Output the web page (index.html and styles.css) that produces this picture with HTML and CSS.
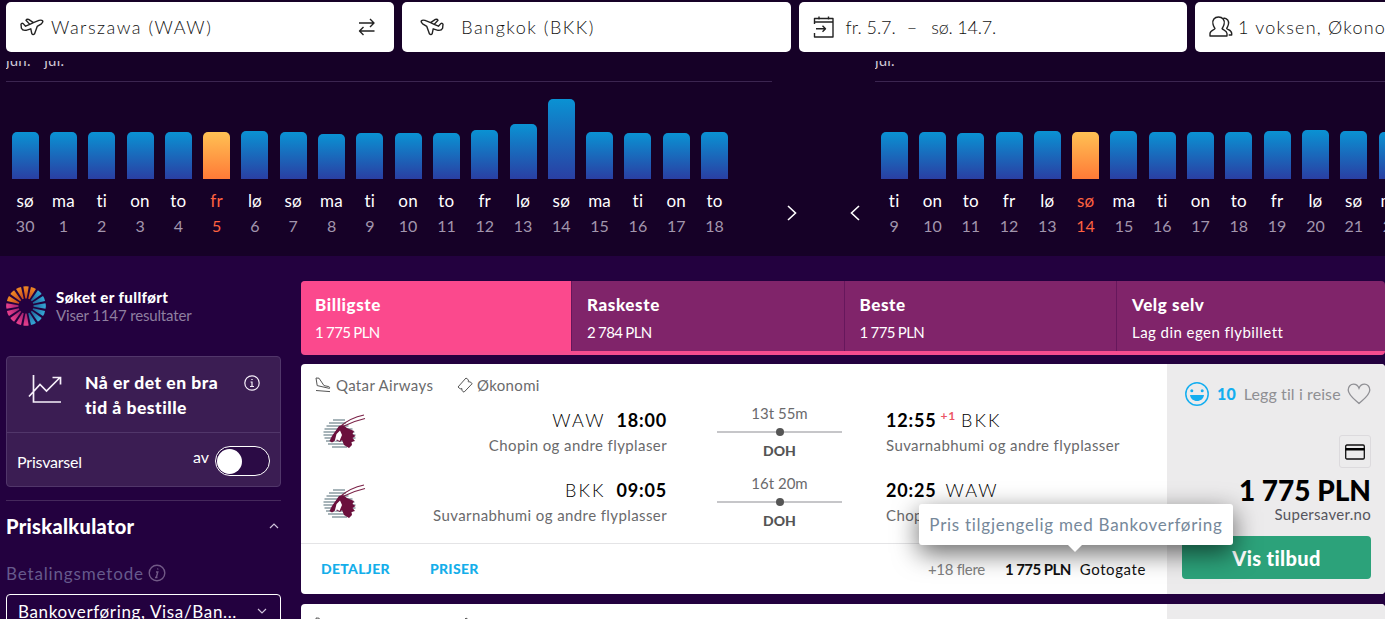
FILE: index.html
```html
<!DOCTYPE html>
<html lang="no">

<head>
    <meta charset="UTF-8">
    <meta name="viewport" content="width=device-width, initial-scale=1.0">
    <title>Warszawa - Bangkok</title>
    <link rel="stylesheet" href="styles.css">
</head>

<body>
    <!-- Symbols used more than once -->
    <svg class="symbols" width="0" height="0">
        <symbol id="plane" viewBox="0 0 24 18">
            <path d="M3.200 5.600 Q1.600 4.800 1 6.200 L1.400 10.200 Q2.600 12.800 6 12.300 L10.800 10.800 L11.800 15.600 Q13 17.400 14.600 15.800 L17.200 8.400 L21.400 5.800 Q23.400 4 22.600 2.800 Q21.500 1.600 19 2.400 L13.400 4.600 L8.600 1.400 Q6.600 1 6 2.200 L9.800 6.400 L5.600 8.200 Z M9.800 6.400 L13.400 4.600"/>
        </symbol>
        <symbol id="qatar" viewBox="0 0 44 36">
            <g stroke="#8b9ca3" stroke-width="1.500">
                <path d="M11 6h12M7 9h17M4.500 12h22M2.500 15h28M1.500 18h31M1.500 21h32M2.500 24h31M4 27h27M6 30h22M10 33h15"/>
            </g>
            <path fill="#6b0f3c" d="M7.500 27 L10 22 L17 12 L21 11 L25 14 L32 17 L30.500 20 L33.500 22 L30.500 24 L33 27 L29.500 28 L30 31 L27 34 L22 31 L20 26 L18 28 L14 26 L10 28.500 Z"/>
            <path fill="#fff" d="M12.500 28 L14.500 20 L18 16.500 L20 21 L17.500 27 L15 25.500 Z"/>
            <path fill="none" stroke="#7b2248" stroke-width="1.200" d="M19 12 Q28 4 42 1 M22 12 Q32 7 43 4.500"/>
        </symbol>
        <symbol id="takeoff" viewBox="0 0 16 16">
            <path d="M1 1 L4 1.200 L9 8.600 L13.800 9.600 Q15.200 10.200 14.500 11.400 L2.200 8.600 Z M1 13.500 L15 14.600"/>
        </symbol>
        <symbol id="ticket" viewBox="0 0 16 16">
            <path d="M1 10 L9 1 L11.600 3 Q10.200 5.400 13 4.800 L15.200 6.600 L7 15.200 L4.800 13.400 Q6 10.800 3.200 11.800 Z"/>
        </symbol>
    </svg>

    <!-- Search bar -->
    <div class="search">
        <div class="field">
            <svg class="line-icon plane" width="24" height="18"><use href="#plane"/></svg>
            <span class="field-text from">Warszawa (WAW)</span>
            <svg class="line-icon swap" width="18" height="18" viewBox="0 0 18 18"><path d="M1 5h15M12 1l4 4-4 4M16.500 13H1.500M5.500 9l-4 4 4 4"/></svg>
        </div>
        <div class="field">
            <svg class="line-icon plane flip" width="24" height="18"><use href="#plane"/></svg>
            <span class="field-text to">Bangkok (BKK)</span>
        </div>
        <div class="field">
            <svg class="line-icon calendar" width="22" height="22" viewBox="0 0 22 22"><path d="M1.500 8V2.500h18.500v18.500H1.500V17M1.500 6H20M6 .5v3M15.500 .5v3M3 12.700h9.500M9.500 9.700l3 3-3 3"/></svg>
            <span class="field-text date">fr. 5.7.</span>
            <span class="field-text date dash">–</span>
            <span class="field-text date">sø. 14.7.</span>
        </div>
        <div class="field">
            <svg class="line-icon people" width="24" height="22" viewBox="0 0 24 22"><path d="M9.500 1c-4 0-6.500 3-5.500 7.200.4 2 1.300 3 2 4.300-.2 1.500-4.800 1.500-5 5V20H18v-2.500c-.2-3.500-4.600-3.500-4.900-5 .7-1.300 1.600-2.300 2-4.300C16.100 4 13.500 1 9.500 1zM14.500 2c4 .3 5.500 3 5 6-.3 2-1.200 3-1.800 4.500.8 1.500 4.800 1.300 5 5V19h-3"/></svg>
            <span class="field-text guests">1 voksen, Økonomi</span>
        </div>
    </div>

    <!-- Price calendar -->
    <div class="calendar-row">
        <div class="chart">
            <div class="months"><span>jun.</span><span>jul.</span></div>
            <div class="days">
                <div class="day"><div class="bar" style="height: 47px"></div><b>sø</b><i>30</i></div>
                <div class="day"><div class="bar" style="height: 47px"></div><b>ma</b><i>1</i></div>
                <div class="day"><div class="bar" style="height: 47px"></div><b>ti</b><i>2</i></div>
                <div class="day"><div class="bar" style="height: 47px"></div><b>on</b><i>3</i></div>
                <div class="day"><div class="bar" style="height: 47px"></div><b>to</b><i>4</i></div>
                <div class="day active"><div class="bar" style="height: 47px"></div><b>fr</b><i>5</i></div>
                <div class="day"><div class="bar" style="height: 48px"></div><b>lø</b><i>6</i></div>
                <div class="day"><div class="bar" style="height: 47px"></div><b>sø</b><i>7</i></div>
                <div class="day"><div class="bar" style="height: 45px"></div><b>ma</b><i>8</i></div>
                <div class="day"><div class="bar" style="height: 46px"></div><b>ti</b><i>9</i></div>
                <div class="day"><div class="bar" style="height: 46px"></div><b>on</b><i>10</i></div>
                <div class="day"><div class="bar" style="height: 46px"></div><b>to</b><i>11</i></div>
                <div class="day"><div class="bar" style="height: 49px"></div><b>fr</b><i>12</i></div>
                <div class="day"><div class="bar" style="height: 55px"></div><b>lø</b><i>13</i></div>
                <div class="day"><div class="bar" style="height: 80px"></div><b>sø</b><i>14</i></div>
                <div class="day"><div class="bar" style="height: 47px"></div><b>ma</b><i>15</i></div>
                <div class="day"><div class="bar" style="height: 46px"></div><b>ti</b><i>16</i></div>
                <div class="day"><div class="bar" style="height: 46px"></div><b>on</b><i>17</i></div>
                <div class="day"><div class="bar" style="height: 47px"></div><b>to</b><i>18</i></div>
            </div>
        </div>
        <div class="arrows">
            <svg width="10" height="16" viewBox="0 0 10 16"><path d="M1 1l7.500 7L1 15"/></svg>
            <svg width="10" height="16" viewBox="0 0 10 16"><path d="M9 1L1.500 8 9 15"/></svg>
        </div>
        <div class="chart">
            <div class="months"><span>jul.</span></div>
            <div class="days">
                <div class="day"><div class="bar" style="height: 47px"></div><b>ti</b><i>9</i></div>
                <div class="day"><div class="bar" style="height: 47px"></div><b>on</b><i>10</i></div>
                <div class="day"><div class="bar" style="height: 46px"></div><b>to</b><i>11</i></div>
                <div class="day"><div class="bar" style="height: 47px"></div><b>fr</b><i>12</i></div>
                <div class="day"><div class="bar" style="height: 48px"></div><b>lø</b><i>13</i></div>
                <div class="day active"><div class="bar" style="height: 47px"></div><b>sø</b><i>14</i></div>
                <div class="day"><div class="bar" style="height: 48px"></div><b>ma</b><i>15</i></div>
                <div class="day"><div class="bar" style="height: 47px"></div><b>ti</b><i>16</i></div>
                <div class="day"><div class="bar" style="height: 47px"></div><b>on</b><i>17</i></div>
                <div class="day"><div class="bar" style="height: 47px"></div><b>to</b><i>18</i></div>
                <div class="day"><div class="bar" style="height: 48px"></div><b>fr</b><i>19</i></div>
                <div class="day"><div class="bar" style="height: 49px"></div><b>lø</b><i>20</i></div>
                <div class="day"><div class="bar" style="height: 48px"></div><b>sø</b><i>21</i></div>
                <div class="day"><div class="bar" style="height: 47px"></div><b>ma</b><i>22</i></div>
            </div>
        </div>
    </div>

    <div class="page">
        <!-- Sidebar -->
        <div class="sidebar">
            <div class="status">
                <svg width="40" height="40" viewBox="-20 -20 40 40">
                    <defs>
                        <path id="ray" d="M-.7 -7.500 L-2.700 -19.500 Q0 -20.200 2.700 -19.500 L.7 -7.500 Z"/>
                        <linearGradient id="orange" x2="0" y2="1"><stop stop-color="#f08a24"/><stop offset="1" stop-color="#c94a1f"/></linearGradient>
                        <linearGradient id="blue" x2="0" y2="1"><stop stop-color="#35a8d8"/><stop offset="1" stop-color="#1f6699"/></linearGradient>
                        <linearGradient id="pink" x2="0" y2="1"><stop stop-color="#ea3f8e"/><stop offset="1" stop-color="#a32470"/></linearGradient>
                    </defs>
                    <g fill="url(#orange)">
                        <use href="#ray" transform="rotate(-67.500)"/><use href="#ray" transform="rotate(-45)"/><use href="#ray" transform="rotate(-22.500)"/><use href="#ray"/><use href="#ray" transform="rotate(22.500)"/>
                    </g>
                    <g fill="url(#blue)">
                        <use href="#ray" transform="rotate(45)"/><use href="#ray" transform="rotate(67.500)"/><use href="#ray" transform="rotate(90)"/><use href="#ray" transform="rotate(112.500)"/><use href="#ray" transform="rotate(135)"/><use href="#ray" transform="rotate(157.500)"/>
                    </g>
                    <g fill="url(#pink)">
                        <use href="#ray" transform="rotate(180)"/><use href="#ray" transform="rotate(202.500)"/><use href="#ray" transform="rotate(225)"/><use href="#ray" transform="rotate(247.500)"/><use href="#ray" transform="rotate(270)"/>
                    </g>
                </svg>
                <div>
                    <div class="status-title">Søket er fullført</div>
                    <div class="status-count">Viser 1147 resultater</div>
                </div>
            </div>

            <div class="advice">
                <div class="advice-top">
                    <svg class="trend" width="34" height="30" viewBox="0 0 34 30"><path d="M5.500 1v27H33M1 22.500L12 10.500l6.500 6.500L31.500 4M24.500 3.500h8v7"/></svg>
                    <div class="advice-text">Nå er det en bra<br>tid å bestille</div>
                    <svg class="info" width="16" height="16" viewBox="0 0 16 16"><circle cx="8" cy="8" r="7.200"/><path d="M6.500 7H8v4.500M6 11.500h4M7.300 4.500h1.400"/></svg>
                </div>
                <div class="advice-bottom">
                    <span class="alert-label">Prisvarsel</span>
                    <span class="alert-state">av</span>
                    <span class="toggle"></span>
                </div>
            </div>

            <div class="section">
                <div class="section-head">
                    <span>Priskalkulator</span>
                    <svg width="10" height="6" viewBox="0 0 10 6"><path d="M1 5l4-4 4 4"/></svg>
                </div>
                <div class="method">
                    <span>Betalingsmetode</span>
                    <svg width="18" height="18" viewBox="0 0 18 18"><circle cx="9" cy="9" r="7.800"/><path d="M8 8h1.800L8.300 13.500M9.800 4.500l-.2 1M7 13.500h2.500"/></svg>
                </div>
                <div class="select">
                    <span>Bankoverføring, Visa/Ban...</span>
                    <svg width="10" height="6" viewBox="0 0 10 6"><path d="M1 1l4 4 4-4"/></svg>
                </div>
            </div>
        </div>

        <!-- Results -->
        <div class="results">
            <div class="tabs">
                <div class="tab selected"><div class="tab-title">Billigste</div><div class="tab-price">1 775 PLN</div></div>
                <div class="tab"><div class="tab-title">Raskeste</div><div class="tab-price">2 784 PLN</div></div>
                <div class="tab"><div class="tab-title">Beste</div><div class="tab-price">1 775 PLN</div></div>
                <div class="tab"><div class="tab-title">Velg selv</div><div class="tab-price wide">Lag din egen flybillett</div></div>
            </div>

            <div class="card">
                <div class="card-main">
                    <div class="card-head">
                        <svg class="head-icon" width="16" height="16"><use href="#takeoff"/></svg>
                        <span class="airline">Qatar Airways</span>
                        <svg class="head-icon" width="16" height="16"><use href="#ticket"/></svg>
                        <span class="cabin">Økonomi</span>
                    </div>
                    <div class="leg">
                        <svg class="airline-logo" width="44" height="36"><use href="#qatar"/></svg>
                        <div class="depart">
                            <div class="place"><span>WAW</span><strong>18:00</strong></div>
                            <div class="airport">Chopin og andre flyplaser</div>
                        </div>
                        <div class="route">
                            <div class="duration">13t 55m</div>
                            <div class="track"></div>
                            <div class="stop">DOH</div>
                        </div>
                        <div class="arrive">
                            <div class="place"><strong>12:55</strong><sup>+1</sup><span>BKK</span></div>
                            <div class="airport">Suvarnabhumi og andre flyplasser</div>
                        </div>
                    </div>
                    <div class="leg">
                        <svg class="airline-logo" width="44" height="36"><use href="#qatar"/></svg>
                        <div class="depart">
                            <div class="place"><span>BKK</span><strong>09:05</strong></div>
                            <div class="airport">Suvarnabhumi og andre flyplasser</div>
                        </div>
                        <div class="route">
                            <div class="duration">16t 20m</div>
                            <div class="track"></div>
                            <div class="stop">DOH</div>
                        </div>
                        <div class="arrive">
                            <div class="place"><strong>20:25</strong><span>WAW</span></div>
                            <div class="airport">Chopin og andre flyplaser</div>
                        </div>
                    </div>
                    <div class="card-foot">
                        <span class="link">DETALJER</span>
                        <span class="link">PRISER</span>
                        <div class="offers">
                            <span class="more">+18 flere</span>
                            <strong>1 775 PLN</strong>
                            <span class="agent">Gotogate</span>
                            <div class="tooltip">Pris tilgjengelig med Bankoverføring</div>
                        </div>
                    </div>
                </div>
                <div class="card-side">
                    <div class="rating">
                        <svg width="24" height="24" viewBox="0 0 24 24"><circle cx="12" cy="12" r="11.200" fill="none" stroke="#14aef0" stroke-width="1.500"/><circle cx="6.800" cy="8.800" r="1.500"/><circle cx="17.200" cy="8.800" r="1.500"/><path d="M5 13h14c-.5 3.800-3.300 6-7 6s-6.500-2.200-7-6z"/></svg>
                        <strong>10</strong>
                        <span>Legg til i reise</span>
                        <svg class="heart" width="24" height="22" viewBox="0 0 24 22"><path d="M12 20.500C7 16 1.200 12 1.200 7c0-3.500 2.500-5.800 5.300-5.800 2.500 0 4.500 1.500 5.500 4 1-2.500 3-4 5.500-4 2.800 0 5.300 2.300 5.300 5.800 0 5-5.800 9-10.800 13.500z"/></svg>
                    </div>
                    <div class="payment">
                        <svg width="22" height="18" viewBox="0 0 22 18"><rect x="1.700" y="2" width="18.600" height="14" rx="1.200" fill="none" stroke="#111" stroke-width="1.300"/><path d="M1.500 5h19v2.500h-19z"/></svg>
                    </div>
                    <div class="price">1 775 PLN</div>
                    <div class="seller">Supersaver.no</div>
                    <div class="button">Vis tilbud</div>
                </div>
            </div>

            <div class="card">
                <div class="card-main">
                    <div class="card-head">
                        <svg class="head-icon" width="16" height="16"><use href="#takeoff"/></svg>
                        <span class="airline"></span>
                        <svg class="head-icon" width="16" height="16"><use href="#ticket"/></svg>
                    </div>
                </div>
                <div class="card-side"></div>
            </div>
        </div>
    </div>
</body>

</html>
```

FILE: styles.css
```css
* {
    box-sizing: border-box;
}

body {
    font-family: Lato, "Open Sans", sans-serif;
    background-color: #23013f;
    color: white;
    margin: 0;
    height: 619px;
    overflow: hidden;
}

svg {
    display: block;
    flex: none;
}

.symbols {
    position: absolute;
}

/* Search bar */
.search {
    display: flex;
    gap: 8px;
    height: 61px;
    padding: 2px 0 9px 6px;
    overflow: hidden;
    background-color: #160127;
}

.field {
    display: flex;
    align-items: center;
    flex: none;
    width: 388.300px;
    padding: 0 14px;
    border-radius: 5px;
    background-color: white;
    color: #111;
}

.line-icon {
    fill: none;
    stroke: #222;
    stroke-width: 1.400;
    stroke-linejoin: round;
}

.field-text {
    font-size: 18px;
    font-weight: 300;
    letter-spacing: 1.500px;
    white-space: nowrap;
}

.from {
    margin-left: 7px;
}

.swap {
    margin-left: auto;
    margin-right: 4px;
}

.flip {
    margin-left: 4px;
    transform: scaleX(-1);
}

.to {
    margin-left: 17px;
}

.date {
    margin-left: 11px;
    letter-spacing: 0;
}

.dash + .date {
    margin-left: 14px;
    letter-spacing: -0.200px;
}

.people {
    margin-right: 5px;
}

.guests {
    letter-spacing: 1.200px;
}

/* Price calendar */
.calendar-row {
    display: flex;
    height: 195px;
    padding-left: 6px;
    overflow: hidden;
    background-color: #160127;
}

.chart {
    flex: none;
    width: 766px;
}

.months {
    display: flex;
    height: 21px;
    overflow: hidden;
    border-bottom: 1px solid #3b2550;
    color: #cfc8d6;
    font-size: 15px;
    line-height: 20px;
}

.months span {
    width: 38.300px;
    margin-top: -11px;
    letter-spacing: 0.200px;
}

.days {
    display: flex;
    height: 173px;
}

.day {
    display: flex;
    flex-direction: column;
    align-items: center;
    justify-content: flex-end;
    width: 38.300px;
    padding-bottom: 17px;
}

.bar {
    width: 27px;
    margin-bottom: 9px;
    border-radius: 5px 5px 0 0;
    background: linear-gradient(#0a92d3, #2a3fa3);
}

.day b {
    font-size: 17px;
    font-weight: 400;
    line-height: 25px;
    letter-spacing: 0.200px;
}

.day i {
    color: #a296ad;
    font-size: 16px;
    font-style: normal;
    line-height: 25px;
}

.day.active .bar {
    background: linear-gradient(#ffc154, #ff7a37);
}

.day.active b,
.day.active i {
    color: #ff6240;
}

.arrows {
    display: flex;
    justify-content: space-between;
    flex: none;
    width: 103px;
    padding: 144px 15px 0;
}

.arrows path,
.section path,
.section circle {
    fill: none;
    stroke: white;
    stroke-width: 1.600;
}

/* Page columns */
.page {
    display: flex;
    gap: 20px;
    height: 363px;
    padding-left: 6px;
    overflow: hidden;
}

.sidebar {
    flex: none;
    width: 275px;
    padding-top: 30px;
}

/* Search status */
.status {
    display: flex;
    gap: 10px;
    height: 70px;
}

.status-title {
    padding-top: 2px;
    font-size: 15px;
    font-weight: 900;
    line-height: 18px;
    letter-spacing: 0.400px;
}

.status-count {
    color: #8f7fa0;
    font-size: 15px;
    line-height: 19px;
    letter-spacing: -0.150px;
}

/* Booking advice */
.advice {
    height: 131px;
    border: 1px solid #51366a;
    border-radius: 4px;
    background-color: #3b1d53;
}

.advice-top {
    display: flex;
    height: 76px;
    padding: 13px 20px 0 21px;
    border-bottom: 1px solid #51366a;
}

.trend {
    margin-top: 4px;
}

.trend path,
.info path,
.info circle {
    fill: none;
    stroke: #f6effa;
    stroke-width: 1.700;
}

.info {
    margin: 5px 0 0 auto;
}

.info path,
.info circle {
    stroke-width: 1.200;
}

.advice-text {
    margin-left: 23px;
    font-size: 17.500px;
    font-weight: 900;
    line-height: 25px;
    letter-spacing: 0.500px;
    white-space: nowrap;
}

.advice-bottom {
    display: flex;
    height: 54px;
    padding: 0 10px;
    font-size: 16px;
    line-height: 58px;
}

.alert-label {
    letter-spacing: -0.200px;
}

.alert-state {
    margin-left: auto;
    margin-right: 6px;
    line-height: 47px;
}

.toggle {
    width: 55px;
    height: 30px;
    margin-top: 13px;
    padding: 2px 1px;
    border: 1px solid white;
    border-radius: 15px;
    background-color: #2b0b45;
}

.toggle::before {
    content: "";
    display: block;
    width: 25px;
    height: 25px;
    border-radius: 50%;
    background-color: white;
}

/* Price calculator */
.section {
    margin-top: 13px;
    border-top: 1px solid #45285c;
}

.section-head {
    display: flex;
    align-items: center;
    justify-content: space-between;
    height: 50px;
    padding-right: 2px;
    font-size: 20px;
    font-weight: 900;
    letter-spacing: 0.300px;
}

.section-head path,
.select path {
    stroke: #cfc3da;
    stroke-width: 1.200;
}

.method {
    display: flex;
    align-items: center;
    gap: 4px;
    height: 43px;
    padding-top: 1px;
    color: #665a8c;
    font-size: 17px;
    letter-spacing: 0.850px;
}

.method path,
.method circle {
    stroke: #715986;
    stroke-width: 1.400;
}

.select {
    display: flex;
    align-items: center;
    justify-content: space-between;
    height: 34px;
    padding: 0 13px 0 11px;
    border: 1px solid white;
    border-radius: 4px;
    font-size: 17px;
    letter-spacing: 0.650px;
}

/* Results */
.results {
    flex: 1;
    padding-top: 25px;
}

.tabs {
    display: flex;
    height: 74px;
    margin-bottom: 9px;
    overflow: hidden;
    border-bottom: 4px solid #f44c8f;
    border-radius: 4px;
    background-color: #80246a;
}

.tab {
    width: 272.500px;
    padding: 11px 0 0 15px;
    border-left: 1px solid #66175c;
    white-space: nowrap;
}

.tab:last-child {
    width: 269px;
}

.tab.selected {
    width: 270px;
    padding-left: 14px;
    border-left: none;
    background-color: #fb498d;
}

.tab-title {
    font-size: 17px;
    font-weight: 900;
    line-height: 26px;
    letter-spacing: 0.600px;
}

.tab-price {
    font-size: 15px;
    line-height: 29px;
    letter-spacing: -0.600px;
    word-spacing: -0.300px;
}

.tab-price.wide {
    letter-spacing: 0.450px;
    word-spacing: 0;
}

/* Flight card */
.card {
    display: flex;
    height: 230px;
    margin-bottom: 10px;
    border-radius: 4px;
    background-color: white;
}

.card-main {
    width: 866px;
    color: #6a6a6c;
}

.card-head {
    display: flex;
    align-items: center;
    height: 38px;
    padding: 4px 14px 0;
    font-size: 15px;
    letter-spacing: 0.350px;
}

.head-icon {
    fill: none;
    stroke: #555;
    stroke-width: 1;
}

.airline {
    width: 97px;
    margin: 0 24px 0 5px;
    white-space: nowrap;
}

.cabin {
    margin-left: 4px;
}

.leg {
    display: flex;
    height: 70px;
    padding-left: 21px;
}

.airline-logo {
    margin-top: 12px;
}

.depart {
    width: 301px;
    padding-top: 6px;
    text-align: right;
}

.arrive {
    padding-top: 6px;
}

.place {
    color: #000;
    font-size: 18px;
    font-weight: 300;
    line-height: 25px;
    height: 25px;
    letter-spacing: 0.800px;
    white-space: nowrap;
}

.place span {
    letter-spacing: 2.100px;
}

.place strong {
    font-weight: 700;
}

.depart strong {
    margin-left: 11px;
}

.arrive span {
    margin-left: 9px;
}

.place sup {
    display: inline-block;
    margin-left: 4px;
    color: #ec5565;
    font-size: 12px;
    font-weight: 700;
    line-height: 1;
    vertical-align: 7px;
}

.arrive sup + span {
    margin-left: 5px;
}

.airport {
    font-size: 15px;
    line-height: 24px;
    letter-spacing: 0.400px;
    white-space: nowrap;
}

.route {
    width: 125px;
    margin: 0 44px 0 50px;
    text-align: center;
}

.duration {
    font-size: 15px;
    line-height: 23px;
}

.track {
    height: 2px;
    margin: 6px 0 5px;
    background-color: #c6c6c9;
}

.track::before {
    content: "";
    display: block;
    width: 8px;
    height: 8px;
    margin: 0 auto;
    border-radius: 50%;
    background-color: #555;
    transform: translateY(-3px);
}

.stop {
    padding-top: 3px;
    color: #555;
    font-size: 14px;
    font-weight: 900;
    line-height: 20px;
}

/* Card footer */
.card-foot {
    display: flex;
    align-items: center;
    height: 51px;
    margin-top: 1px;
    padding: 0 21px 0 20px;
    border-top: 1px solid #e4e4e6;
}

.link {
    margin-right: 40px;
    color: #14aeea;
    font-size: 14px;
    font-weight: 900;
    line-height: 18px;
    letter-spacing: 0.300px;
}

.offers {
    display: flex;
    align-items: center;
    position: relative;
    margin-left: auto;
    color: #111;
    font-size: 15px;
}

.offers strong {
    letter-spacing: -0.550px;
}

.more {
    margin-right: 20px;
    padding-bottom: 1px;
    color: #808080;
    letter-spacing: -0.300px;
}

.agent {
    margin-left: 9px;
    letter-spacing: 0.600px;
}

.tooltip {
    position: absolute;
    right: -87px;
    bottom: 34px;
    width: 314px;
    border-radius: 3px;
    background-color: white;
    box-shadow: 0 8px 26px rgba(0, 0, 0, 0.600);
    color: #76889a;
    font-size: 17px;
    line-height: 41px;
    letter-spacing: 0.720px;
    text-align: center;
    white-space: nowrap;
}

.tooltip::after {
    content: "";
    position: absolute;
    left: 149px;
    top: 41px;
    border: 7px solid transparent;
    border-top-color: white;
    border-bottom: none;
}

/* Price side of the card */
.card-side {
    width: 218px;
    padding: 0 14px 0 15px;
    border-radius: 0 4px 4px 0;
    background-color: #ecebec;
    color: #55555d;
}

.rating {
    display: flex;
    align-items: center;
    height: 59px;
    padding-left: 3px;
    fill: #14aef0;
    color: #8f8f93;
    font-size: 16px;
    letter-spacing: 0.100px;
    white-space: nowrap;
}

.rating strong {
    margin: 0 8px;
    color: #14aef0;
    font-weight: 900;
}

.heart {
    margin-left: auto;
    fill: none;
    stroke: #909095;
    stroke-width: 1.300;
}

.payment {
    width: 32px;
    height: 33px;
    margin: 12px 0 0 auto;
    padding: 7px 4px;
    border: 1px solid #dcdadd;
    border-radius: 3px;
}

.price {
    color: black;
    font-size: 28px;
    font-weight: 900;
    line-height: 32px;
    margin-top: 6px;
    text-align: right;
    white-space: nowrap;
}

.seller {
    font-size: 15px;
    line-height: 16px;
    letter-spacing: 0.300px;
    text-align: right;
}

.button {
    height: 43px;
    margin-top: 14px;
    border-radius: 4px;
    background-color: #2ca27a;
    color: white;
    font-size: 20px;
    font-weight: 900;
    line-height: 44px;
    letter-spacing: 0.350px;
    text-align: center;
}
```
